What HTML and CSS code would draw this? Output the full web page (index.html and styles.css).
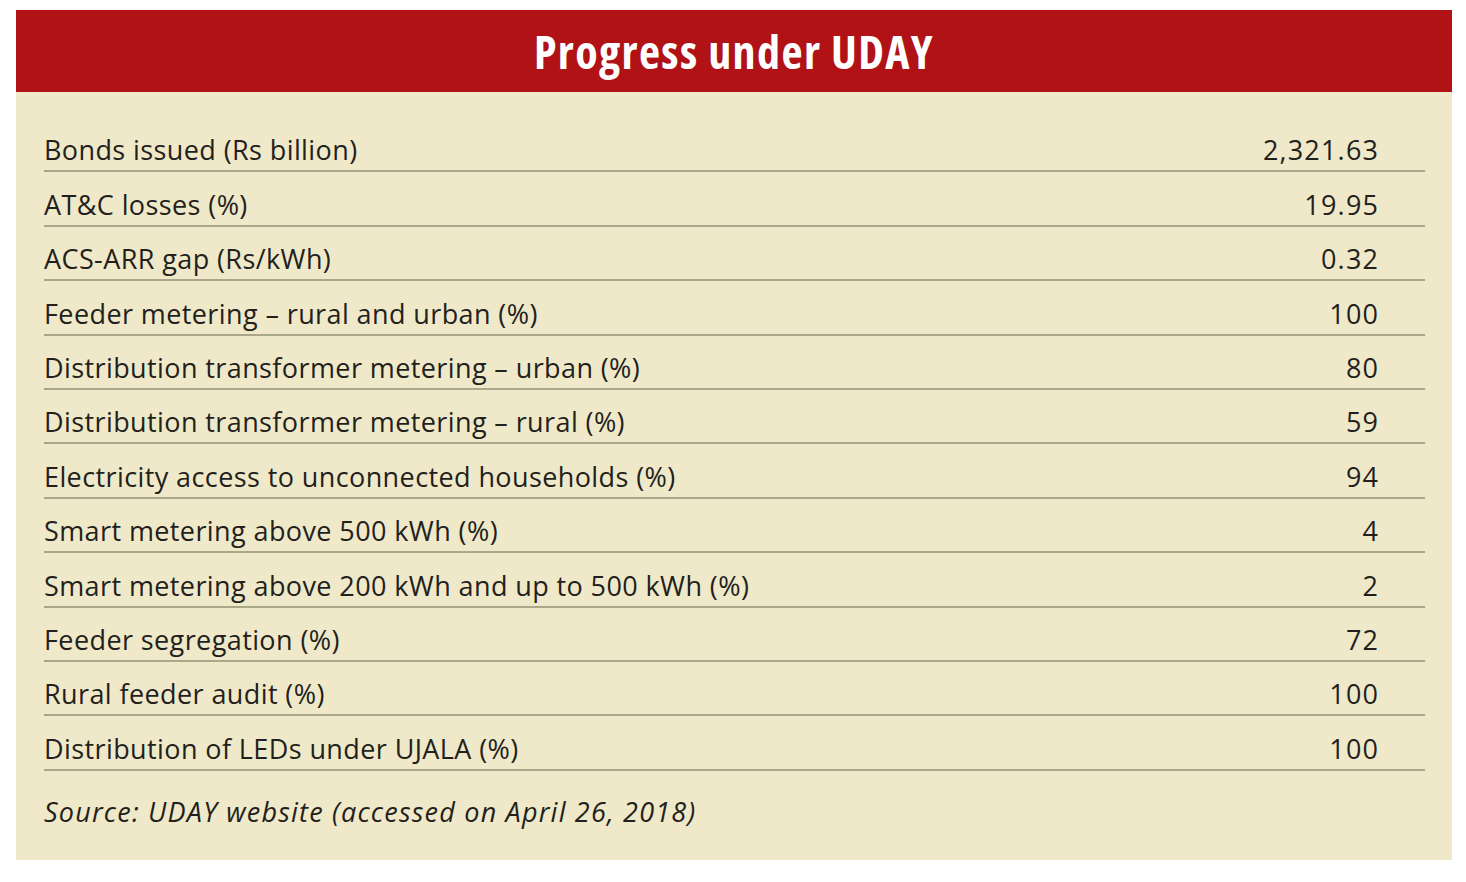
FILE: index.html
```html
<!DOCTYPE html>
<html lang="en">
<head>
<meta charset="utf-8">
<title>Progress under UDAY</title>
<link rel="stylesheet" href="styles.css">
</head>
<body>
<div class="card">
  <div class="card-head"><h1 class="title">Progress under UDAY</h1></div>
  <div class="card-body">
    <div class="row"><span class="label">Bonds issued (Rs billion)</span><span class="value">2,321.63</span></div>
    <div class="row"><span class="label">AT&amp;C losses (%)</span><span class="value">19.95</span></div>
    <div class="row"><span class="label">ACS-ARR gap (Rs/kWh)</span><span class="value">0.32</span></div>
    <div class="row"><span class="label">Feeder metering – rural and urban (%)</span><span class="value">100</span></div>
    <div class="row"><span class="label">Distribution transformer metering – urban (%)</span><span class="value">80</span></div>
    <div class="row"><span class="label">Distribution transformer metering – rural (%)</span><span class="value">59</span></div>
    <div class="row"><span class="label">Electricity access to unconnected households (%)</span><span class="value">94</span></div>
    <div class="row"><span class="label">Smart metering above 500 kWh (%)</span><span class="value">4</span></div>
    <div class="row"><span class="label">Smart metering above 200 kWh and up to 500 kWh (%)</span><span class="value">2</span></div>
    <div class="row"><span class="label">Feeder segregation (%)</span><span class="value">72</span></div>
    <div class="row"><span class="label">Rural feeder audit (%)</span><span class="value">100</span></div>
    <div class="row"><span class="label">Distribution of LEDs under UJALA (%)</span><span class="value">100</span></div>
    <p class="source">Source: UDAY website (accessed on April 26, 2018)</p>
  </div>
</div>
</body>
</html>
```
FILE: styles.css
```css
* { box-sizing: border-box; }
html, body { margin: 0; padding: 0; background: #ffffff; }
body {
  padding: 10px 14px 0 16px;
  font-family: "Open Sans", "Liberation Sans", sans-serif;
  color: #231f1c;
}
.card {
  width: 1436px;
  height: 850px;
  background: #efe9c9;
  display: flex;
  flex-direction: column;
}
.card-head {
  height: 82px;
  background: #b01216;
  display: flex;
  justify-content: center;
}
.title {
  margin: 0;
  padding-top: 13px;
  font-family: "Open Sans", sans-serif;
  font-stretch: condensed;
  font-weight: 700;
  font-size: 46px;
  letter-spacing: 1.4px;
  line-height: 56px;
  color: #ffffff;
}
.card-body {
  padding: 26px 27px 0 28px;
}
.row {
  height: 54.4px;
  border-bottom: 2px solid #aaa78a;
  display: flex;
  justify-content: space-between;
  align-items: flex-end;
  padding: 0 47px 6px 0;
  font-size: 27px;
  letter-spacing: 0.4px;
  line-height: 28px;
}
.value { letter-spacing: 1.2px; margin-right: -1.2px; }
.source {
  margin: 0;
  padding-top: 27px;
  font-style: italic;
  font-size: 27px;
  letter-spacing: 1.2px;
  line-height: 28px;
}
```
